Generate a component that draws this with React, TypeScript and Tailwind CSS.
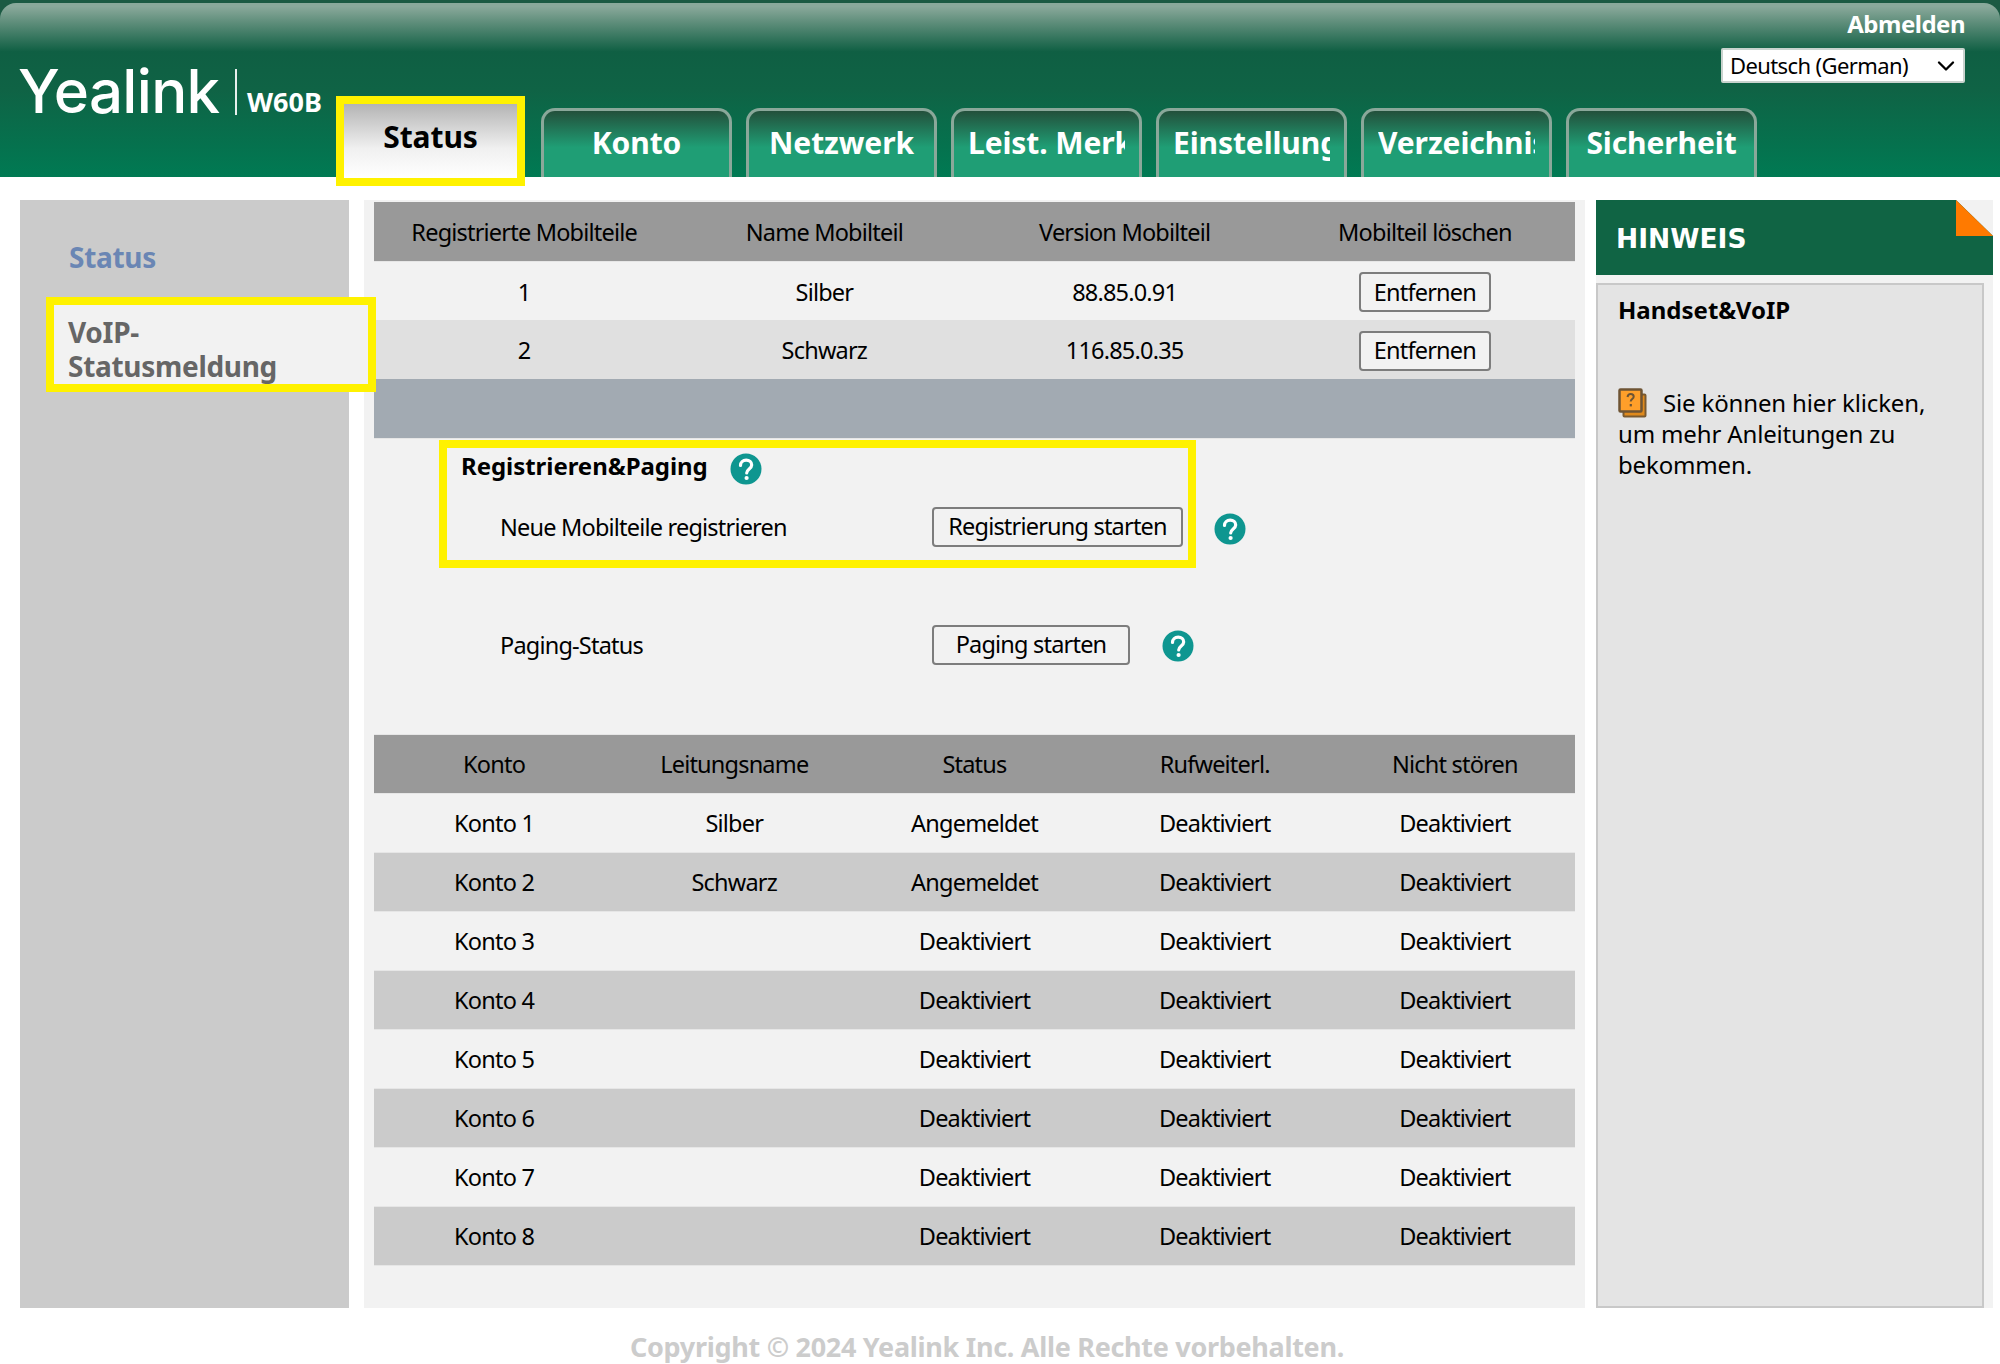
import { ChevronDown } from 'lucide-react';

const tabs = ['Konto', 'Netzwerk', 'Leist. Merkmale', 'Einstellungen', 'Verzeichnis', 'Sicherheit'];

const handsets = [
  { id: '1', name: 'Silber', version: '88.85.0.91' },
  { id: '2', name: 'Schwarz', version: '116.85.0.35' },
];

const accounts = [
  ['Konto 1', 'Silber', 'Angemeldet'],
  ['Konto 2', 'Schwarz', 'Angemeldet'],
  ['Konto 3', '', 'Deaktiviert'],
  ['Konto 4', '', 'Deaktiviert'],
  ['Konto 5', '', 'Deaktiviert'],
  ['Konto 6', '', 'Deaktiviert'],
  ['Konto 7', '', 'Deaktiviert'],
  ['Konto 8', '', 'Deaktiviert'],
];

function HelpIcon({ className = '' }: { className?: string }) {
  return (
    <svg viewBox="0 0 32 32" className={`w-8 h-8 shrink-0 ${className}`}>
      <circle cx="16" cy="16" r="15.5" fill="#0e9690" />
      <path d="M10.5 12.5c0-3.4 2.4-5.3 5.7-5.3 3.2 0 5.5 1.9 5.5 4.7 0 3.9-5 4.1-5 8" fill="none" stroke="#fff" strokeWidth="3.2" strokeLinecap="round" />
      <circle cx="16.600" cy="25" r="2.100" fill="#fff" />
    </svg>
  );
}

function BookIcon() {
  return (
    <svg viewBox="0 0 30 30" className="inline-block w-[30px] h-[30px] mr-[15px] align-[-6px]">
      <rect x="5.500" y="6.500" width="22" height="22" rx="1" fill="#e08a1c" stroke="#7a5a30" strokeWidth="2" />
      <rect x="1.500" y="1.500" width="22" height="22" rx="1" fill="#ff9f2a" stroke="#6e5434" strokeWidth="2.500" />
      <path d="M9.500 9c.3-2 1.600-3 3.200-3 1.700 0 3 1 3 2.700 0 2.300-3 2.500-3 4.800" fill="none" stroke="#6e5434" strokeWidth="2" />
      <rect x="11.700" y="16" width="2.200" height="2.400" fill="#6e5434" />
    </svg>
  );
}

function SmallButton({ label, className }: { label: string; className: string }) {
  return (
    <button className={`h-10 shrink-0 rounded-[4px] border-2 border-[#7d7d7d] bg-[#f2f2f2] text-black ${className}`}>
      {label}
    </button>
  );
}

export default function App() {
  return (
    <div className="w-[2000px] h-[1364px] overflow-hidden bg-white text-[23.5px] text-black font-['Noto_Sans',sans-serif]">
      {/* Header */}
      <header className="h-[177px] pt-[3px] bg-[#1c5a43]">
        <div className="h-full rounded-t-[16px] flex flex-col bg-[linear-gradient(to_bottom,#8aa99b_2%,#5f8e7b_11%,#0f5f43_28%,#0f6345_50%,#007a53_100%)]">
          <div className="h-[93px] shrink-0 flex flex-col items-end pr-[35px] pt-[5px]">
            <a className="text-[24px] leading-[32px] font-bold text-white tracking-[-0.5px]">Abmelden</a>
            <div className="mt-[8px] w-[244px] h-[35px] bg-white border-2 border-[#c9d3ce] rounded-[2px] flex items-center justify-between pl-[7px] pr-[3px] text-[22px] tracking-[-0.6px]">
              <span>Deutsch (German)</span>
              <ChevronDown className="w-7 h-7" strokeWidth={2} />
            </div>
          </div>
          <div className="flex-1 min-h-0 flex items-end pl-5">
            <div className="w-[316px] self-start -mt-[31px] flex items-end text-white">
              <span className="w-[215px] -ml-[2px] mr-[2px] -mb-[2px] text-[60px] leading-[52px] font-['Inter',sans-serif] font-medium tracking-[-0.7px] blur-[0.6px]">Yealink</span>
              <span className="w-[2px] h-[46px] bg-white/90" />
              <span className="ml-[10px] text-[27px] leading-[26px] font-bold">W60B</span>
            </div>
            <div className="flex items-end gap-[14px]">
              <div className="relative z-10 -mb-[9px] mr-[2px] w-[189px] h-[90px] border-8 border-[#fff200] bg-[linear-gradient(to_bottom,#b4b4b4,#f0f0f0_60%,#ffffff)] text-center text-[30px] font-bold tracking-[-0.1px] leading-[66px]">
                Status
              </div>
              {tabs.map((tab) => (
                <div key={tab} className="w-[191px] h-[69px] px-[14px] rounded-t-[14px] border-[3px] border-b-0 border-[#8aa89a] bg-[linear-gradient(to_bottom,#23503b,#1f9e75_55%)]">
                  <div className="overflow-hidden whitespace-nowrap text-center text-white text-[30px] font-bold tracking-[-0.1px] leading-[64px]">{tab}</div>
                </div>
              ))}
            </div>
          </div>
        </div>
      </header>

      {/* Body */}
      <div className="mt-[23px] ml-5 flex h-[1108px]">
        <aside className="w-[329px] pt-[40px] bg-[#cbcbcb] font-bold text-[28px] leading-[34px] tracking-[-0.3px]">
          <div className="pl-[49px] text-[#6a86b4]">Status</div>
          <div className="relative z-10 mt-[23px] ml-[26px] w-[330px] h-[95px] border-8 border-[#fff200] bg-[#f2f2f2] pl-[14px] pt-[10px] text-[#666666]">
            VoIP-
            <br />
            Statusmeldung
          </div>
        </aside>

        <main className="ml-[15px] w-[1221px] px-[10px] pt-[2px] bg-[#f2f2f2] tracking-[-0.8px]">
          <table className="w-[1201px] table-fixed text-center [&_td]:pt-[3px] [&_th]:pt-[3px]">
            <thead>
              <tr className="h-[59px] bg-[#999999] border-b border-[#e6e6e6]">
                <th className="font-normal">Registrierte Mobilteile</th>
                <th className="font-normal">Name Mobilteil</th>
                <th className="font-normal">Version Mobilteil</th>
                <th className="font-normal">Mobilteil löschen</th>
              </tr>
            </thead>
            <tbody>
              {handsets.map((h, i) => (
                <tr key={h.id} className={`h-[59px] ${i % 2 ? 'bg-[#e0e0e0]' : 'bg-[#f2f2f2]'}`}>
                  <td>{h.id}</td>
                  <td>{h.name}</td>
                  <td>{h.version}</td>
                  <td>
                    <SmallButton label="Entfernen" className="w-[132px]" />
                  </td>
                </tr>
              ))}
              <tr className="h-[59px] bg-[#a2aab2] border-b border-[#e6e6e6]">
                <td colSpan={4} />
              </tr>
            </tbody>
          </table>

          <div className="flex items-start ml-[65px] mt-px">
            <div className="w-[757px] h-[128px] shrink-0 border-8 border-[#fff200] pl-[14px] pt-[5px]">
              <div className="flex items-center h-8">
                <h3 className="w-[269px] pb-[5px] text-[24px] font-bold tracking-[-0.05px]">Registrieren&amp;Paging</h3>
                <HelpIcon />
              </div>
              <div className="flex items-center mt-[22px] pl-[39px]">
                <span className="w-[432px] pt-[3px]">Neue Mobilteile registrieren</span>
                <SmallButton label="Registrierung starten" className="w-[251px]" />
              </div>
            </div>
            <HelpIcon className="ml-[18px] mt-[73px]" />
          </div>

          <div className="flex items-center mt-[57px] ml-[126px]">
            <span className="w-[432px] pt-[3px]">Paging-Status</span>
            <SmallButton label="Paging starten" className="w-[198px]" />
            <HelpIcon className="ml-8 mt-[3px]" />
          </div>

          <table className="w-[1201px] mt-[69px] table-fixed text-center [&_td]:pt-[3px] [&_th]:pt-[3px]">
            <thead>
              <tr className="h-[59px] bg-[#999999] border-y border-[#e6e6e6]">
                <th className="font-normal">Konto</th>
                <th className="font-normal">Leitungsname</th>
                <th className="font-normal">Status</th>
                <th className="font-normal">Rufweiterl.</th>
                <th className="font-normal">Nicht stören</th>
              </tr>
            </thead>
            <tbody>
              {accounts.map((a, i) => (
                <tr key={a[0]} className={`h-[59px] border-y border-[#e6e6e6] ${i % 2 ? 'bg-[#cbcbcb]' : 'bg-[#f2f2f2]'}`}>
                  <td>{a[0]}</td>
                  <td>{a[1]}</td>
                  <td>{a[2]}</td>
                  <td>Deaktiviert</td>
                  <td>Deaktiviert</td>
                </tr>
              ))}
            </tbody>
          </table>
        </main>

        <aside className="ml-[11px] w-[397px] flex flex-col bg-[#f2f2f2]">
          <div className="relative h-[75px] shrink-0 bg-[#106444] pl-5 font-['DejaVu_Sans',sans-serif] text-[26.5px] leading-[77px] font-bold text-white">
            HINWEIS
            <svg viewBox="0 0 37 36" className="absolute top-0 right-0 w-[37px] h-9">
              <path d="M0 0H37V36Z" fill="#f2f2f2" />
              <path d="M0 0V36H37Z" fill="#ff7a00" />
            </svg>
          </div>
          <div className="mt-2 w-[388px] flex-1 border-2 border-[#c8c8c8] bg-[#e4e4e4] pl-5 pr-5 pt-[9px] text-[24px] leading-[31px]">
            <div className="font-bold">Handset&amp;VoIP</div>
            <p className="mt-[62px] tracking-[-0.15px]">
              <BookIcon />
              Sie können hier klicken, um mehr Anleitungen zu bekommen.
            </p>
          </div>
        </aside>
      </div>

      <footer className="mt-[24px] pr-[26px] text-center text-[27px] leading-[30px] font-bold text-[#cccccc] tracking-[-0.3px]">
        Copyright © 2024 Yealink Inc. Alle Rechte vorbehalten.
      </footer>
    </div>
  );
}
